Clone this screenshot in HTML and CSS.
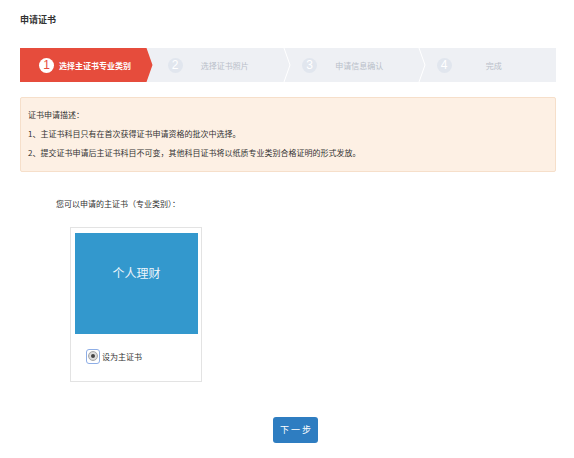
FILE: index.html
```html
<!DOCTYPE html>
<html lang="zh">
<head>
<meta charset="utf-8">
<title>申请证书</title>
<link rel="stylesheet" href="styles.css">
</head>
<body>
<div class="page">
  <h1 class="title">申请证书</h1>

  <div class="steps">
    <div class="step active">
      <span class="num">1</span>
      <span class="label">选择主证书专业类别</span>
    </div>
    <div class="step">
      <span class="num">2</span>
      <span class="label">选择证书照片</span>
      <svg class="sep" width="8" height="34" viewBox="0 0 8 34"><polyline points="1,0 7,17 1,34" fill="none" stroke="#ffffff" stroke-width="1"/></svg>
    </div>
    <div class="step">
      <span class="num">3</span>
      <span class="label">申请信息确认</span>
      <svg class="sep" width="8" height="34" viewBox="0 0 8 34"><polyline points="1,0 7,17 1,34" fill="none" stroke="#ffffff" stroke-width="1"/></svg>
    </div>
    <div class="step">
      <span class="num">4</span>
      <span class="label">完成</span>
    </div>
  </div>

  <div class="notice">
    <p class="notice-title">证书申请描述：</p>
    <p>1、主证书科目只有在首次获得证书申请资格的批次中选择。</p>
    <p>2、提交证书申请后主证书科目不可变，其他科目证书将以纸质专业类别合格证明的形式发放。</p>
  </div>

  <p class="choose">您可以申请的主证书（专业类别）：</p>

  <div class="card">
    <div class="card-cover">个人理财</div>
    <div class="card-radio">
      <span class="radio"><span class="radio-ball"><span class="radio-dot"></span></span></span>
      <span class="radio-label">设为主证书</span>
    </div>
  </div>

  <div class="actions">
    <button class="next">下 一 步</button>
  </div>
</div>
</body>
</html>
```

FILE: styles.css
```css
* { box-sizing: border-box; }

body {
  margin: 0;
  background: #ffffff;
  font-family: "Noto Sans CJK SC", "Liberation Sans", sans-serif;
  color: #333333;
}

.page {
  padding: 14px 18px 0 20px;
}

.title {
  margin: 0;
  font-size: 9px;
  line-height: 12px;
  font-weight: bold;
  color: #333333;
}

.steps {
  margin-top: 22px;
  display: flex;
  height: 34px;
  background: #eef0f4;
}

.step {
  position: relative;
  flex: 1;
  display: flex;
  align-items: center;
  padding-left: 15px;
  padding-right: 20px;
}

.step.active {
  background: #e64c3c;
  clip-path: polygon(0 0, calc(100% - 6px) 0, 100% 50%, calc(100% - 6px) 100%, 0 100%);
  padding-left: 19px;
  padding-right: 14px;
}

.num {
  width: 15px;
  height: 15px;
  border-radius: 50%;
  background: #e1e6ee;
  color: #ffffff;
  font-family: "Liberation Sans", sans-serif;
  font-size: 12px;
  line-height: 15px;
  text-align: center;
  flex: none;
}

.step.active .num {
  background: #ffffff;
  color: #e64c3c;
}

.label {
  flex: 1;
  text-align: center;
  font-size: 8px;
  color: #b9bfc9;
  white-space: nowrap;
}

.step.active .label {
  color: #ffffff;
  font-weight: bold;
  text-align: left;
  margin-left: 5px;
}

.sep {
  position: absolute;
  right: -4px;
  top: 0;
  z-index: 1;
}

.notice {
  margin-top: 15px;
  background: #fdf0e4;
  border: 1px solid #f6dfca;
  border-radius: 2px;
  padding: 7px 7px 9px;
}

.notice p {
  margin: 0;
  font-size: 8px;
  line-height: 19px;
  color: #333333;
}

.choose {
  margin: 26px 0 0 36px;
  font-size: 8px;
  line-height: 12px;
  color: #333333;
}

.card {
  margin: 17px 0 0 50px;
  width: 132px;
  border: 1px solid #e3e3e3;
  padding: 5px 3px 18px 4px;
}

.card-cover {
  width: 123px;
  height: 101px;
  background: #3398cd;
  color: #eef5fb;
  font-size: 12px;
  display: flex;
  align-items: center;
  justify-content: center;
  padding-bottom: 22px;
}

.card-radio {
  margin-top: 15px;
  margin-left: 11px;
  display: flex;
  align-items: center;
  gap: 2px;
  height: 14px;
}

.radio {
  width: 14px;
  height: 15px;
  border: 1px solid #8eaee6;
  border-radius: 3px;
  display: flex;
  align-items: center;
  justify-content: center;
}

.radio-ball {
  width: 10px;
  height: 10px;
  border-radius: 50%;
  background: radial-gradient(circle, #f0f0f0 0%, #c9c9c9 100%);
  border: 1px solid #a8a8a8;
  display: flex;
  align-items: center;
  justify-content: center;
}

.radio-dot {
  width: 4px;
  height: 4px;
  border-radius: 50%;
  background: #444444;
}

.radio-label {
  font-size: 8px;
  color: #333333;
}

.actions {
  margin-top: 32px;
  padding-left: 253px;
}

.next {
  width: 45px;
  height: 26px;
  border: none;
  border-radius: 3px;
  background: #2e7dc1;
  color: #ffffff;
  font-family: "Noto Sans CJK SC", sans-serif;
  font-size: 9px;
  padding: 0;
}
```
